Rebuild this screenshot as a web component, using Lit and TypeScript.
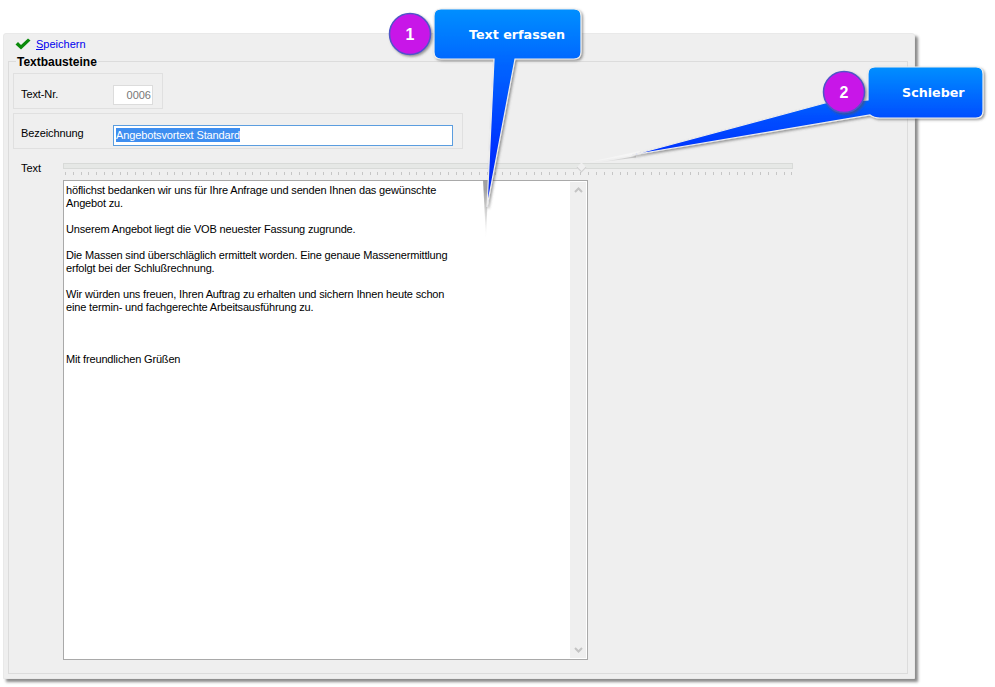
import { LitElement, html, css, svg } from "lit";
import { customElement } from "lit/decorators.js";

const LINES = [
  "höflichst bedanken wir uns für Ihre Anfrage und senden Ihnen das gewünschte",
  "Angebot zu.",
  "",
  "Unserem Angebot liegt die VOB neuester Fassung zugrunde.",
  "",
  "Die Massen sind überschläglich ermittelt worden. Eine genaue Massenermittlung",
  "erfolgt bei der Schlußrechnung.",
  "",
  "Wir würden uns freuen, Ihren Auftrag zu erhalten und sichern Ihnen heute schon",
  "eine termin- und fachgerechte Arbeitsausführung zu.",
  "",
  "",
  "",
  "Mit freundlichen Grüßen",
];

@customElement("app-root")
export class AppRoot extends LitElement {
  static styles = css`
    :host {
      display: block;
      position: relative;
      width: 995px;
      height: 687px;
      overflow: hidden;
      background: #fff;
      font-family: "Liberation Sans", Arial, sans-serif;
      font-size: 11px;
      color: #000;
    }
    .stage { padding: 33px 0 0 3px; }
    .window {
      box-sizing: border-box;
      width: 912px;
      height: 646px;
      background: #efefef;
      border: 1px solid #e9e9e9;
      border-radius: 3px 3px 0 0;
      box-shadow: 3px 3px 3px #8a8a8a;
      display: flex;
      flex-direction: column;
    }
    .toolbar {
      height: 27px;
      flex: none;
      display: flex;
      align-items: center;
      gap: 5px;
      padding: 0 0 8px 11px;
      box-sizing: border-box;
    }
    .save { color: #0000ee; text-decoration: none; }
    .save u { text-decoration: underline; }
    .group {
      position: relative;
      box-sizing: border-box;
      margin-left: 4px;
      width: 900px;
      height: 613px;
      border: 1px solid #dcdcdc;
      padding: 11px 0 0 4px;
      display: flex;
      flex-direction: column;
      align-items: flex-start;
    }
    .legend {
      position: absolute;
      left: 7px;
      top: -6px;
      background: #efefef;
      padding: 0 1px;
      font-weight: bold;
      font-size: 12px;
      line-height: 13px;
      color: #000;
    }
    .panel {
      box-sizing: border-box;
      height: 36px;
      border: 1px solid #e0e0e0;
      display: flex;
      align-items: center;
      padding-left: 7px;
    }
    .panel.nr { width: 150px; margin-bottom: 4px; padding-top: 6px; }
    .panel.name { width: 450px; }
    .panel label { width: 92px; flex: none; letter-spacing: -0.1px; }
    .panel.name label { padding-top: 4px; }
    .nr-input {
      box-sizing: border-box;
      width: 40px;
      height: 20px;
      background: #fff;
      border: 1px solid #dcdcdc;
      color: #777;
      text-align: right;
      padding-right: 1px;
      line-height: 18px;
      margin-top: 2px;
    }
    .name-input {
      box-sizing: border-box;
      width: 340px;
      height: 21px;
      background: #fff;
      border: 1px solid #5b9ddf;
      padding-left: 2px;
      line-height: 18px;
      margin-top: 8px;
    }
    .name-input span {
      background: #3e8ef0;
      color: #fff;
      display: inline-block;
      line-height: 14px;
      letter-spacing: -0.13px;
    }
    .text-row {
      display: flex;
      margin-top: 14px;
      padding-left: 8px;
    }
    .text-label { width: 42px; flex: none; line-height: 11px; }
    .right { display: flex; flex-direction: column; }
    .track {
      position: relative;
      box-sizing: border-box;
      width: 730px;
      height: 6px;
      background: #e6e8e6;
      border: 1px solid #d8dad8;
    }
    .thumb {
      position: absolute;
      left: 514px;
      top: 0;
      width: 7px;
      height: 7px;
      background: #efefef;
      transform: rotate(45deg);
      border-right: 1px solid #d0d0d0;
      border-bottom: 1px solid #d0d0d0;
      box-sizing: border-box;
    }
    .ticks {
      height: 5px;
      margin-top: 3px;
      display: block;
    }
    .editor {
      box-sizing: border-box;
      width: 525px;
      height: 480px;
      margin-top: 3px;
      background: #fff;
      border: 1px solid #a9a9a9;
      display: flex;
      justify-content: space-between;
      padding: 1px;
    }
    .content {
      padding: 2px 0 0 1px;
      line-height: 13px;
      white-space: pre;
      color: #000;
      letter-spacing: -0.16px;
    }
    .scroll {
      width: 16px;
      background: #efefef;
      display: flex;
      flex-direction: column;
      justify-content: space-between;
      align-items: center;
      padding: 5px 0;
    }
    .overlay { position: absolute; left: 0; top: 0; pointer-events: none; }
    .ctext { font-family: "DejaVu Sans", sans-serif; font-weight: bold; font-size: 12.7px; fill: #fff; }
    .num { font-family: "Liberation Sans", sans-serif; font-weight: bold; font-size: 16px; fill: #fff; }
  `;

  private ticks() {
    const items = [];
    for (let i = 0; i < 94; i++) {
      const x = Math.round(2 + i * 7.81) + 0.5;
      items.push(svg`<line x1=${x} x2=${x} y1="0" y2="3" stroke="#c6c6c6" stroke-width="1"></line>`);
    }
    return html`<svg class="ticks" width="730" height="5">${items}</svg>`;
  }

  private callouts() {
    return html`<svg class="overlay" width="995" height="687">
      <defs>
        <linearGradient id="g1" gradientUnits="userSpaceOnUse" x1="0" y1="9" x2="0" y2="207">
          <stop offset="0" stop-color="#008fff"></stop>
          <stop offset="0.27" stop-color="#0066ff"></stop>
          <stop offset="0.7" stop-color="#0033ff"></stop>
          <stop offset="1" stop-color="#0022ee"></stop>
        </linearGradient>
        <linearGradient id="g2" gradientUnits="userSpaceOnUse" x1="0" y1="67" x2="0" y2="156">
          <stop offset="0" stop-color="#008fff"></stop>
          <stop offset="0.55" stop-color="#0050ff"></stop>
          <stop offset="1" stop-color="#0030ff"></stop>
        </linearGradient>
        <linearGradient id="fade1" gradientUnits="userSpaceOnUse" x1="0" y1="190" x2="0" y2="238">
          <stop offset="0" stop-color="#999" stop-opacity="0.9"></stop>
          <stop offset="1" stop-color="#bbb" stop-opacity="0"></stop>
        </linearGradient>
        <linearGradient id="fade2" gradientUnits="userSpaceOnUse" x1="640" y1="0" x2="584" y2="0">
          <stop offset="0" stop-color="#f6f6f6" stop-opacity="1"></stop>
          <stop offset="1" stop-color="#f6f6f6" stop-opacity="0.6"></stop>
        </linearGradient>
        <linearGradient id="fade3" gradientUnits="userSpaceOnUse" x1="632" y1="0" x2="596" y2="0">
          <stop offset="0" stop-color="#aaa" stop-opacity="0.6"></stop>
          <stop offset="1" stop-color="#bbb" stop-opacity="0"></stop>
        </linearGradient>
        <filter id="sh" x="-20%" y="-20%" width="140%" height="140%">
          <feDropShadow dx="1.5" dy="1.5" stdDeviation="1.2" flood-color="#555" flood-opacity="0.6"></feDropShadow>
        </filter>
        <filter id="b1" x="-50%" y="-10%" width="200%" height="120%"><feGaussianBlur stdDeviation="0.7"></feGaussianBlur></filter>
      </defs>

      <polygon points="483,180 488.5,180 486,238" fill="url(#fade1)" filter="url(#b1)"></polygon>
      <path d="M441 9 H574 Q581 9 581 16 V52 Q581 59 574 59 H515 L487 207 L494 59 H441 Q434 59 434 52 V16 Q434 9 441 9 Z"
        fill="url(#g1)" stroke="#eeeeee" stroke-width="1.2" filter="url(#sh)"></path>
      <circle cx="410" cy="34" r="20.5" fill="#c815e8" stroke="#4f55c8" stroke-width="1.5" filter="url(#sh)"></circle>
      <text class="num" x="410" y="40" text-anchor="middle">1</text>
      <text class="ctext" x="469" y="39">Text erfassen</text>

      <polygon points="640,151 584,163 640,154" fill="url(#fade2)"></polygon>
      <polygon points="636,156 596,163 636,157.5" fill="url(#fade3)"></polygon>
      <path d="M875 67 H976 Q983 67 983 74 V111 Q983 118 976 118 H880 Q874 118 870 115 L632 155 L825 103 L868 100 V74 Q868 67 875 67 Z"
        fill="url(#g2)" stroke="#eeeeee" stroke-width="1.2" filter="url(#sh)"></path>
      <circle cx="844" cy="92" r="20.5" fill="#c815e8" stroke="#4f55c8" stroke-width="1.5" filter="url(#sh)"></circle>
      <text class="num" x="844" y="98" text-anchor="middle">2</text>
      <text class="ctext" x="902" y="97">Schieber</text>
    </svg>`;
  }

  render() {
    return html`
      <div class="stage">
        <div class="window">
          <div class="toolbar">
            <svg width="16" height="12" viewBox="0 0 16 12">
              <path d="M0.5 6.5 L3 4 L6 7 L13 0.5 L15.5 2.5 L6 11.5 Z" fill="#0a8a0a"></path>
            </svg>
            <a class="save" href="#"><u>S</u>peichern</a>
          </div>
          <div class="group">
            <div class="legend">Textbausteine</div>
            <div class="panel nr">
              <label>Text-Nr.</label>
              <div class="nr-input">0006</div>
            </div>
            <div class="panel name">
              <label>Bezeichnung</label>
              <div class="name-input"><span>Angebotsvortext Standard</span></div>
            </div>
            <div class="text-row">
              <div class="text-label">Text</div>
              <div class="right">
                <div class="track"><div class="thumb"></div></div>
                ${this.ticks()}
                <div class="editor">
                  <div class="content">${LINES.join("\n")}</div>
                  <div class="scroll">
                    <svg width="9" height="6" viewBox="0 0 9 6"><path d="M1 5 L4.5 1.5 L8 5" fill="none" stroke="#c4c4c4" stroke-width="2"></path></svg>
                    <svg width="9" height="6" viewBox="0 0 9 6"><path d="M1 1 L4.5 4.5 L8 1" fill="none" stroke="#c4c4c4" stroke-width="2"></path></svg>
                  </div>
                </div>
              </div>
            </div>
          </div>
        </div>
      </div>
      ${this.callouts()}
    `;
  }
}
